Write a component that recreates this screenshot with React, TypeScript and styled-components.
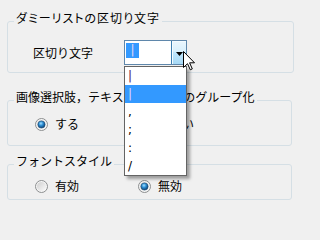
import React from "react";
import styled, { createGlobalStyle } from "styled-components";

const Global = createGlobalStyle`
  html, body { margin: 0; padding: 0; background: #f0f0f0; }
  body {
    width: 297px; height: 211px; overflow: hidden;
    font-family: "Noto Sans CJK JP", "Noto Sans", sans-serif;
    font-size: 12px; color: #000;
  }
`;

const Page = styled.div`
  width: 297px;
  height: 211px;
  box-sizing: border-box;
  padding: 10px 0 0 7px;
  display: flex;
  flex-direction: column;
  align-items: flex-start;
`;

const Group = styled.fieldset<{ $w: number; $mt: number; $pb: number }>`
  margin: ${(p) => p.$mt}px 0 0 0;
  width: ${(p) => p.$w}px;
  box-sizing: border-box;
  border: 1px solid #d5dfe5;
  border-radius: 3px;
  padding: 0 6px ${(p) => p.$pb}px;
  min-inline-size: 0;
`;

const Title = styled.legend<{ $palt?: boolean; $ls?: number }>`
  box-sizing: border-box;
  height: 23px;
  padding: 0 2px 7px;
  line-height: 16px;
  font-size: 12px;
  white-space: nowrap;
  letter-spacing: ${(p) => p.$ls ?? 0}px;
  font-feature-settings: ${(p) => (p.$palt ? '"palt"' : "normal")};
`;

const ComboRow = styled.div`
  display: flex;
  align-items: center;
  margin-top: 7px;
  padding-left: 19px;
  height: 25px;
`;

const Label = styled.span`
  width: 91px;
  line-height: 16px;
`;

const Combo = styled.div`
  position: relative;
  display: flex;
  width: 63px;
  height: 25px;
  box-sizing: border-box;
  border: 1px solid #5f87ab;
  background: #fff;
`;

const Field = styled.div`
  flex: 1;
  padding: 2px 1px;
  display: flex;
  align-items: flex-start;
`;

const Selected = styled.span`
  width: 13px;
  height: 15px;
  background: #3399ff;
  color: #e6d6f2;
  font-family: "DejaVu Sans", sans-serif;
  font-size: 12px;
  line-height: 15px;
  text-align: center;
`;

const DropButton = styled.div`
  width: 15px;
  box-sizing: border-box;
  border-left: 1px solid #3c7fb1;
  background: linear-gradient(#eaf6fd 0%, #d9f0fc 45%, #bee6fd 50%, #a7d9f5 100%);
  box-shadow: inset 1px 1px 0 #f4fbff;
  display: flex;
  justify-content: center;
  align-items: center;
  padding-top: 3px;
`;

const List = styled.ul`
  position: absolute;
  left: -1px;
  top: 25px;
  width: 63px;
  box-sizing: border-box;
  margin: 0;
  padding: 0;
  list-style: none;
  border: 1px solid #646464;
  background: #fff;
  box-shadow: 3px 3px 3px rgba(0, 0, 0, 0.35);
  z-index: 5;
`;

const Item = styled.li<{ $active?: boolean; $ink?: string }>`
  height: 18px;
  line-height: 18px;
  padding-left: 3px;
  font-family: "DejaVu Sans", sans-serif;
  font-size: 12px;
  background: ${(p) => (p.$active ? "#3399ff" : "transparent")};
  color: ${(p) => (p.$active ? "#e6d6f2" : p.$ink || "#000")};
`;

const Cursor = styled.svg`
  position: absolute;
  left: 58px;
  top: 10px;
  z-index: 10;
`;

const RadioRow = styled.div<{ $mt: number }>`
  display: grid;
  grid-template-columns: 103px auto;
  align-items: center;
  height: 20px;
  margin-top: ${(p) => p.$mt}px;
  padding-left: 21px;
`;

const RadioItem = styled.label`
  display: flex;
  align-items: center;
  gap: 7px;
  line-height: 16px;
  white-space: nowrap;
`;

const RadioIcon = ({ checked }: { checked?: boolean }) => (
  <svg width="13" height="13" viewBox="0 0 13 13">
    <defs>
      <linearGradient id="rbg" x1="0" y1="0" x2="1" y2="1">
        <stop offset="0" stopColor="#cfcfcf" />
        <stop offset="1" stopColor="#fbfbfb" />
      </linearGradient>
      <radialGradient id="rdot" cx="0.42" cy="0.35" r="0.65">
        <stop offset="0" stopColor="#a6e0ff" />
        <stop offset="0.45" stopColor="#2d8fd5" />
        <stop offset="1" stopColor="#0c3f70" />
      </radialGradient>
    </defs>
    <circle cx="6.5" cy="6.5" r="6" fill="#f6f6f6" stroke="#8c8e8f" />
    <circle cx="6.5" cy="6.5" r="4.6" fill="url(#rbg)" />
    {checked && <circle cx="6.5" cy="6.5" r="3.6" fill="url(#rdot)" stroke="#1b4a74" strokeWidth="0.6" />}
  </svg>
);

const Radio = ({ checked, label }: { checked?: boolean; label: string }) => (
  <RadioItem>
    <RadioIcon checked={checked} />
    <span>{label}</span>
  </RadioItem>
);

export default function App() {
  return (
    <>
      <Global />
      <Page>
        <Group $w={287} $mt={0} $pb={7}>
          <Title $palt $ls={1}>ダミーリストの区切り文字</Title>
          <ComboRow>
            <Label>区切り文字</Label>
            <Combo>
              <Field>
                <Selected>|</Selected>
              </Field>
              <DropButton>
                <svg width="7" height="4" viewBox="0 0 7 4">
                  <polygon points="0,0 7,0 3.5,4" fill="#000" />
                </svg>
              </DropButton>
              <List>
                <Item $ink="#4a1050">|</Item>
                <Item $active>|</Item>
                <Item>,</Item>
                <Item>;</Item>
                <Item>:</Item>
                <Item>/</Item>
              </List>
              <Cursor width="12" height="20" viewBox="0 0 12 20">
                <path d="M0.5 0.5 V16.5 L4.5 12.7 L7.3 18.8 L9.3 17.9 L6.6 11.8 H11.5 Z" fill="#fff" stroke="#000" strokeWidth="1" strokeLinejoin="miter" />
              </Cursor>
            </Combo>
          </ComboRow>
        </Group>

        <Group $w={285} $mt={16} $pb={11}>
          <Title>画像選択肢，テキストボックスのグループ化</Title>
          <RadioRow $mt={2}>
            <Radio checked label="する" />
            <Radio label="しない" />
          </RadioRow>
        </Group>

        <Group $w={285} $mt={7} $pb={3}>
          <Title>フォントスタイル</Title>
          <RadioRow $mt={0}>
            <Radio label="有効" />
            <Radio checked label="無効" />
          </RadioRow>
        </Group>
      </Page>
    </>
  );
}
